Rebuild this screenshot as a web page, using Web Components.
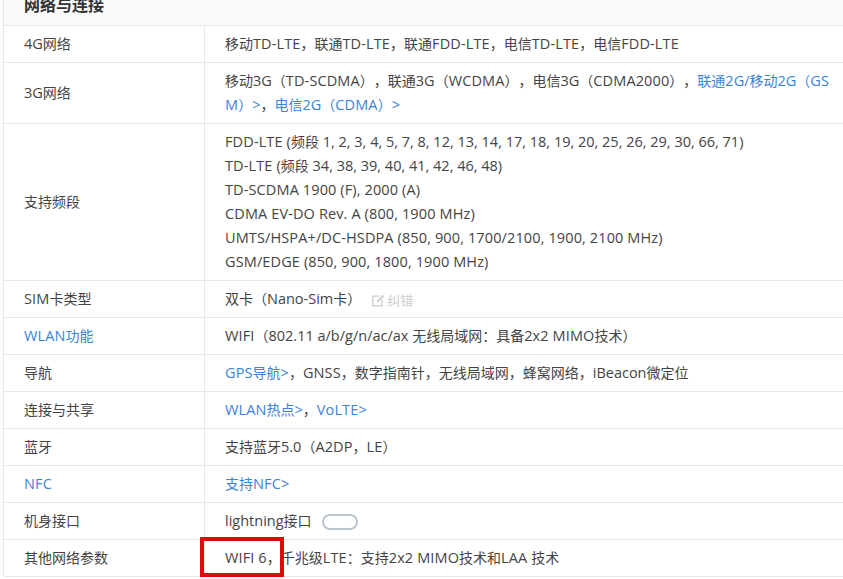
<!DOCTYPE html>
<html lang="zh">
<head>
<meta charset="utf-8">
<title>网络与连接</title>
<style>
    html, body { margin: 0; height: 579px; overflow: hidden; background: #fff; }
    body { font-family: "Open Sans", "Noto Sans CJK SC", sans-serif; color: #444; text-spacing-trim: space-all; font-feature-settings: "chws" 0; }
    a { color: #3b83d8; text-decoration: none; }
    .lat { font-size: 14.5px; line-height: 1; }
    .lat.caps { letter-spacing: .12px; }
</style>
</head>
<body>
<template id="param-table-tpl">
    <style>
        :host {
            display: block;
            margin-top: -10px;
            margin-left: 3px;
            border-left: 1px solid #e8e8e8;
            font-size: 14px;
            color: #444;
        }
        .head {
            height: 35px;
            line-height: 30px;
            padding-left: 20px;
            background: #fafafa;
            border-bottom: 1px solid #e8e8e8;
            font-size: 16px;
            font-weight: 700;
            color: #333;
        }
    </style>
    <div class="head"><slot name="title"></slot></div>
    <slot></slot>
</template>

<template id="param-row-tpl">
    <style>
        :host {
            display: grid;
            grid-template-columns: 201px 1fr;
            border-bottom: 1px solid #e8e8e8;
            line-height: 24px;
        }
        .label {
            display: flex;
            align-items: center;
            padding-left: 20px;
            border-right: 1px solid #e8e8e8;
        }
        .value {
            padding: 6px 0 6px 20px;
            min-height: 24px;
            word-break: break-all;
        }
    </style>
    <div class="label"><slot name="label"></slot></div>
    <div class="value"><slot></slot></div>
</template>

<template id="fix-link-tpl">
    <style>
        :host { display: inline-flex; align-items: center; gap: 2px; margin-left: 10px; height: 16px; color: #ccc; font-size: 13px; line-height: 16px; vertical-align: middle; }
        svg { width: 14px; height: 14px; }
    </style>
    <svg viewBox="0 0 14 14" fill="none">
        <path d="M1 2.5h8L7.5 4H2.5v8h8V8L12 6.5V13.5H1z" fill="#d4d4d4"/>
        <path d="M5.5 9.5l.6-2.4L11.6 1.6l1.8 1.8-5.5 5.5z" fill="#d4d4d4"/>
    </svg>
    <span>纠错</span>
</template>

<template id="port-pill-tpl">
    <style>
        :host {
            display: inline-block;
            box-sizing: border-box;
            width: 36px;
            height: 16px;
            margin-left: 10px;
            border: 2px solid #bcc6d0;
            border-radius: 8px;
            vertical-align: middle;
        }
    </style>
</template>

<template id="red-mark-tpl">
    <style>
        :host {
            position: absolute;
            left: 200px;
            top: 537px;
            width: 76px;
            height: 32px;
            border: 4px solid #e00a0a;
        }
    </style>
</template>

<param-table>
    <span slot="title">网络与连接</span>
    <param-row><span slot="label">4G网络</span>移动TD-LTE，联通TD-LTE，联通FDD-LTE，电信TD-LTE，电信FDD-LTE</param-row>
    <param-row><span slot="label">3G网络</span>移动3G（TD-SCDMA），联通3G（WCDMA），电信3G（CDMA2000），<a href="#">联通2G/移动2G（GSM）&gt;</a>，<a href="#">电信2G（CDMA）&gt;</a></param-row>
    <param-row><span slot="label">支持频段</span>FDD-LTE (频段 1, 2, 3, 4, 5, 7, 8, 12, 13, 14, 17, 18, 19, 20, 25, 26, 29, 30, 66, 71)<br>TD-LTE (频段 34, 38, 39, 40, 41, 42, 46, 48)<br>TD-SCDMA 1900 (F), 2000 (A)<br>CDMA EV-DO Rev. A (800, 1900 MHz)<br>UMTS/HSPA+/DC-HSDPA (850, 900, 1700/2100, 1900, 2100 MHz)<br>GSM/EDGE (850, 900, 1800, 1900 MHz)</param-row>
    <param-row><span slot="label">SIM卡类型</span>双卡（Nano-Sim卡）<fix-link></fix-link></param-row>
    <param-row><a slot="label" href="#">WLAN功能</a>WIFI（802.11 a/b/g/n/ac/ax 无线局域网：具备2x2 MIMO技术）</param-row>
    <param-row><span slot="label">导航</span><a href="#">GPS导航&gt;</a>，GNSS，数字指南针，无线局域网，蜂窝网络，iBeacon微定位</param-row>
    <param-row><span slot="label">连接与共享</span><a href="#">WLAN热点&gt;</a>，<a href="#">VoLTE&gt;</a></param-row>
    <param-row><span slot="label">蓝牙</span>支持蓝牙5.0（A2DP，LE）</param-row>
    <param-row><a slot="label" href="#">NFC</a><a href="#">支持NFC&gt;</a></param-row>
    <param-row><span slot="label">机身接口</span>lightning接口<port-pill></port-pill></param-row>
    <param-row><span slot="label">其他网络参数</span>WIFI 6，千兆级LTE：支持2x2 MIMO技术和LAA 技术</param-row>
</param-table>
<red-mark></red-mark>

<script>
    // every element just clones its own template into an open shadow root
    function defineFromTemplate(tag, tplId) {
        customElements.define(tag, class extends HTMLElement {
            constructor() {
                super();
                this.attachShadow({ mode: "open" });
                this.shadowRoot.appendChild(document.getElementById(tplId).content.cloneNode(true));
            }
        });
    }

    defineFromTemplate("param-table", "param-table-tpl");
    defineFromTemplate("param-row", "param-row-tpl");
    defineFromTemplate("fix-link", "fix-link-tpl");
    defineFromTemplate("port-pill", "port-pill-tpl");
    defineFromTemplate("red-mark", "red-mark-tpl");

    // latin runs sit a bit larger than the CJK text in the original, capitals wider still
    const walker = document.createTreeWalker(document.querySelector("param-table"), NodeFilter.SHOW_TEXT);
    const textNodes = [];
    while (walker.nextNode()) textNodes.push(walker.currentNode);
    for (const node of textNodes) {
        if (!/[\x21-\x7e]/.test(node.nodeValue)) continue;
        const frag = document.createDocumentFragment();
        for (const part of node.nodeValue.split(/([\x20-\x7e]+)/)) {
            if (!part) continue;
            if (/^[\x20-\x7e]+$/.test(part)) {
                const span = document.createElement("span");
                span.className = /[A-Z]{2}/.test(part) ? "lat caps" : "lat";
                span.textContent = part;
                frag.appendChild(span);
            } else {
                frag.appendChild(document.createTextNode(part));
            }
        }
        node.replaceWith(frag);
    }
</script>
</body>
</html>
